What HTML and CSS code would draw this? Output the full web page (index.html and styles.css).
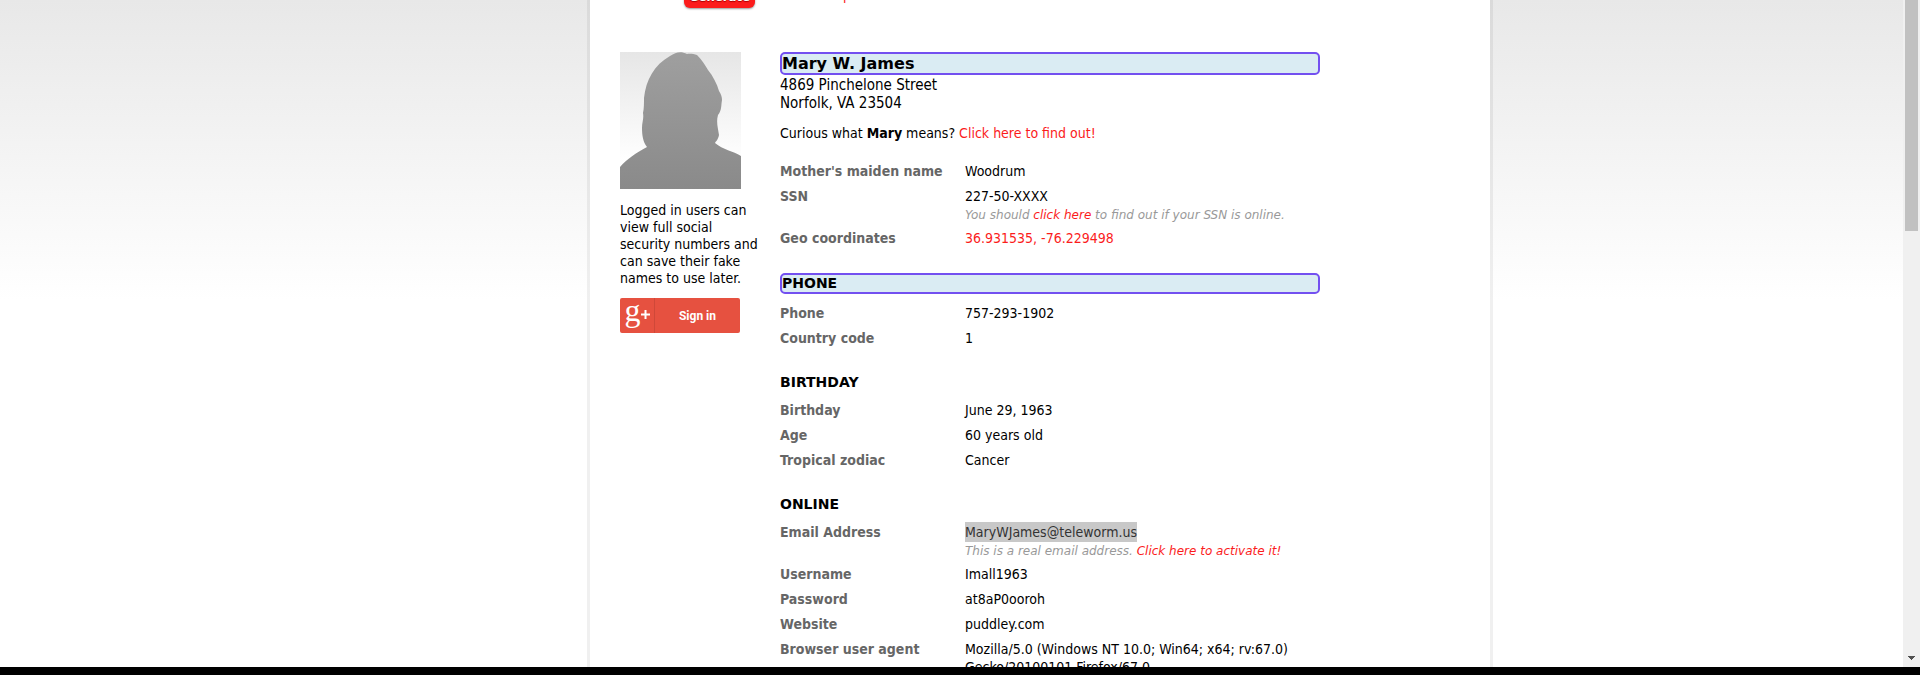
FILE: index.html
```
<!DOCTYPE html>
<html lang="en">
<head>
<meta charset="utf-8">
<title>Mary W. James</title>
<link rel="stylesheet" href="styles.css">
</head>
<body>
<div class="viewport">
  <div class="stage">
  <main class="sheet">
    <div class="toolbar">
      <button class="generate" type="button">Generate</button>
      <a class="advanced" href="#">Advanced Options</a>
    </div>
    <div class="content">
      <aside class="side">
        <svg class="avatar" viewBox="0 0 121 137" role="img" aria-label="Female silhouette">
          <defs>
            <linearGradient id="back" x1="0" y1="0" x2="0" y2="1"><stop offset="0" stop-color="#e6e6e6"/><stop offset="0.8" stop-color="#ffffff"/></linearGradient>
            <linearGradient id="figure" x1="0" y1="0" x2="0" y2="1"><stop offset="0" stop-color="#9f9f9f"/><stop offset="1" stop-color="#8a8a8a"/></linearGradient>
          </defs>
          <rect width="121" height="137" fill="url(#back)"/>
          <path fill="url(#figure)" d="M0 137V115C7 107 16 101 27 95C23 90 22 83 22 76C22 70 24 67 23 61C24 57 24 50 24 46C26 28 34 13 50 4C56 0 61 -1 67 2C70 1.500 74 2 77 3C82 8 85 13 88 18C93 24 97 32 99 39C101 42 102 45 102 48C101 53 102 58 98 63C96 70 98 76 99 83C98 88 96 89 95 91C103 98 113 99 121 104V137Z"/>
        </svg>
        <p class="pitch">Logged in users can view full social security numbers and can save their fake names to use later.</p>
        <button class="signin" type="button">
          <span class="gplus">g<svg class="plus" viewBox="0 0 9 9" aria-hidden="true"><path d="M4 0H5V4H9V5H5V9H4V5H0V4H4Z" fill="#fff" stroke="#fff"/></svg></span>
          <span class="signin-label">Sign in</span>
        </button>
      </aside>
      <section class="info">
        <h1 class="name marked">Mary W. James</h1>
        <address class="address">4869 Pinchelone Street<br>Norfolk, VA 23504</address>
        <p class="meaning">Curious what <b>Mary</b> means? <a href="#">Click here to find out!</a></p>
        <dl class="facts">
          <dt>Mother's maiden name</dt><dd>Woodrum</dd>
          <dt>SSN</dt><dd>227-50-XXXX<div class="note">You should <a href="#">click here</a> to find out if your SSN is online.</div></dd>
          <dt>Geo coordinates</dt><dd><a href="#">36.931535, -76.229498</a></dd>
        </dl>
        <h2 class="heading marked">PHONE</h2>
        <dl class="facts">
          <dt>Phone</dt><dd>757-293-1902</dd>
          <dt>Country code</dt><dd>1</dd>
        </dl>
        <h2 class="heading">BIRTHDAY</h2>
        <dl class="facts">
          <dt>Birthday</dt><dd>June 29, 1963</dd>
          <dt>Age</dt><dd>60 years old</dd>
          <dt>Tropical zodiac</dt><dd>Cancer</dd>
        </dl>
        <h2 class="heading">ONLINE</h2>
        <dl class="facts">
          <dt>Email Address</dt><dd><span class="selected">MaryWJames@teleworm.us</span><div class="note">This is a real email address. <a href="#">Click here to activate it!</a></div></dd>
          <dt>Username</dt><dd>Imall1963</dd>
          <dt>Password</dt><dd>at8aP0ooroh</dd>
          <dt>Website</dt><dd>puddley.com</dd>
          <dt>Browser user agent</dt><dd>Mozilla/5.0 (Windows NT 10.0; Win64; x64; rv:67.0) Gecko/20100101 Firefox/67.0</dd>
        </dl>
      </section>
    </div>
  </main>
  </div>
  <div class="scrollbar">
    <div class="thumb"></div>
    <svg class="arrow" viewBox="0 0 7 4" aria-hidden="true"><path d="M0 0H7V1H6V2H5V3H4V4H3V3H2V2H1V1H0Z" fill="#505050" shape-rendering="crispEdges"/></svg>
  </div>
</div>
</body>
</html>
```
FILE: styles.css
```
* { box-sizing: border-box; }
body {
  margin: 0;
  height: 100vh;
  overflow: hidden;
  padding-bottom: 8px;
  background: #000;
  color: #000;
  font: 14px/17px Tahoma, "DejaVu Sans Condensed", "DejaVu Sans", sans-serif;
}
a { color: #fb1c1c; text-decoration: none; }
h1, h2, p, dl, dd { margin: 0; }
.viewport {
  display: flex;
  height: 100%;
  overflow: hidden;
  background: linear-gradient(#e8e8e8, #fff 300px);
}
.stage {
  display: flex;
  flex: 1;
  justify-content: center;
  padding-left: 177px;
}
.sheet {
  width: 906px;
  flex: none;
  border: solid rgba(0, 0, 0, 0.06);
  border-width: 0 3px;
  background: #fff;
  background-clip: padding-box;
}
.toolbar {
  display: flex;
  align-items: flex-end;
  gap: 12px;
  height: 8px;
  padding-left: 94px;
}
.generate {
  flex: none;
  width: 71px;
  height: 24px;
  border: 0;
  border-radius: 6px;
  background: #fc1c1c;
  color: #fff;
  font: bold 13px/17px "DejaVu Sans Condensed", sans-serif;
  text-shadow: 0 1px 1px #a00;
  box-shadow: 0 1px 2px rgba(0, 0, 0, 0.4);
  padding: 0;
}
.advanced { margin-bottom: 4px; }
.content {
  display: flex;
  gap: 20px;
  padding: 44px 170px 0 30px;
}
.side { width: 140px; flex: none; }
.avatar { display: block; width: 121px; height: 137px; }
.pitch { margin: 13px 0 11px; }
.signin {
  display: flex;
  width: 120px;
  height: 35px;
  padding: 0;
  border: 0;
  border-radius: 2px;
  background: #e65140;
  color: #fff;
}
.gplus {
  display: flex;
  align-items: center;
  justify-content: center;
  width: 35px;
  height: 35px;
  border-right: 1px solid #cf4839;
  font: 32px/24px "Liberation Serif", serif;
  padding-bottom: 12px;
}
.plus { width: 9px; height: 9px; margin-top: 10px; }
.signin-label {
  flex: 1;
  font: bold 12px/36px Roboto, sans-serif;
}
.info { flex: 1; }
.marked {
  border: 2px solid #7350f0;
  border-radius: 5px;
  background: #daecf3;
}
.name {
  padding-top: 1px;
  font: bold 16px/18px Tahoma, "DejaVu Sans", sans-serif;
}
.address { font-style: normal; font-size: 15px; line-height: 18px; padding-top: 1px; }
.meaning { margin: 13px 0 17px; }
.facts {
  display: grid;
  grid-template-columns: 185px 1fr;
  line-height: 18px;
}
.facts dt, .facts dd { padding: 3px 0 4px; }
.facts dt { color: #666; font-weight: bold; }
.note {
  margin: 2px 0 -2px;
  color: #999;
  font: italic 12px/17px Tahoma, "DejaVu Sans", sans-serif;
}
.heading {
  margin: 23px 0 7px;
  font: bold 14px/17px Tahoma, "DejaVu Sans", sans-serif;
}
.heading.marked { margin-top: 22px; }
.selected { background: #c8c8c8; color: #333; padding: 2px 0; }
.scrollbar {
  display: flex;
  flex-direction: column;
  justify-content: space-between;
  align-items: center;
  width: 17px;
  background: #f0f0f0;
  padding-bottom: 7px;
}
.thumb { width: 13px; height: 231px; background: #c1c1c1; }
.arrow { width: 7px; height: 4px; }
```
